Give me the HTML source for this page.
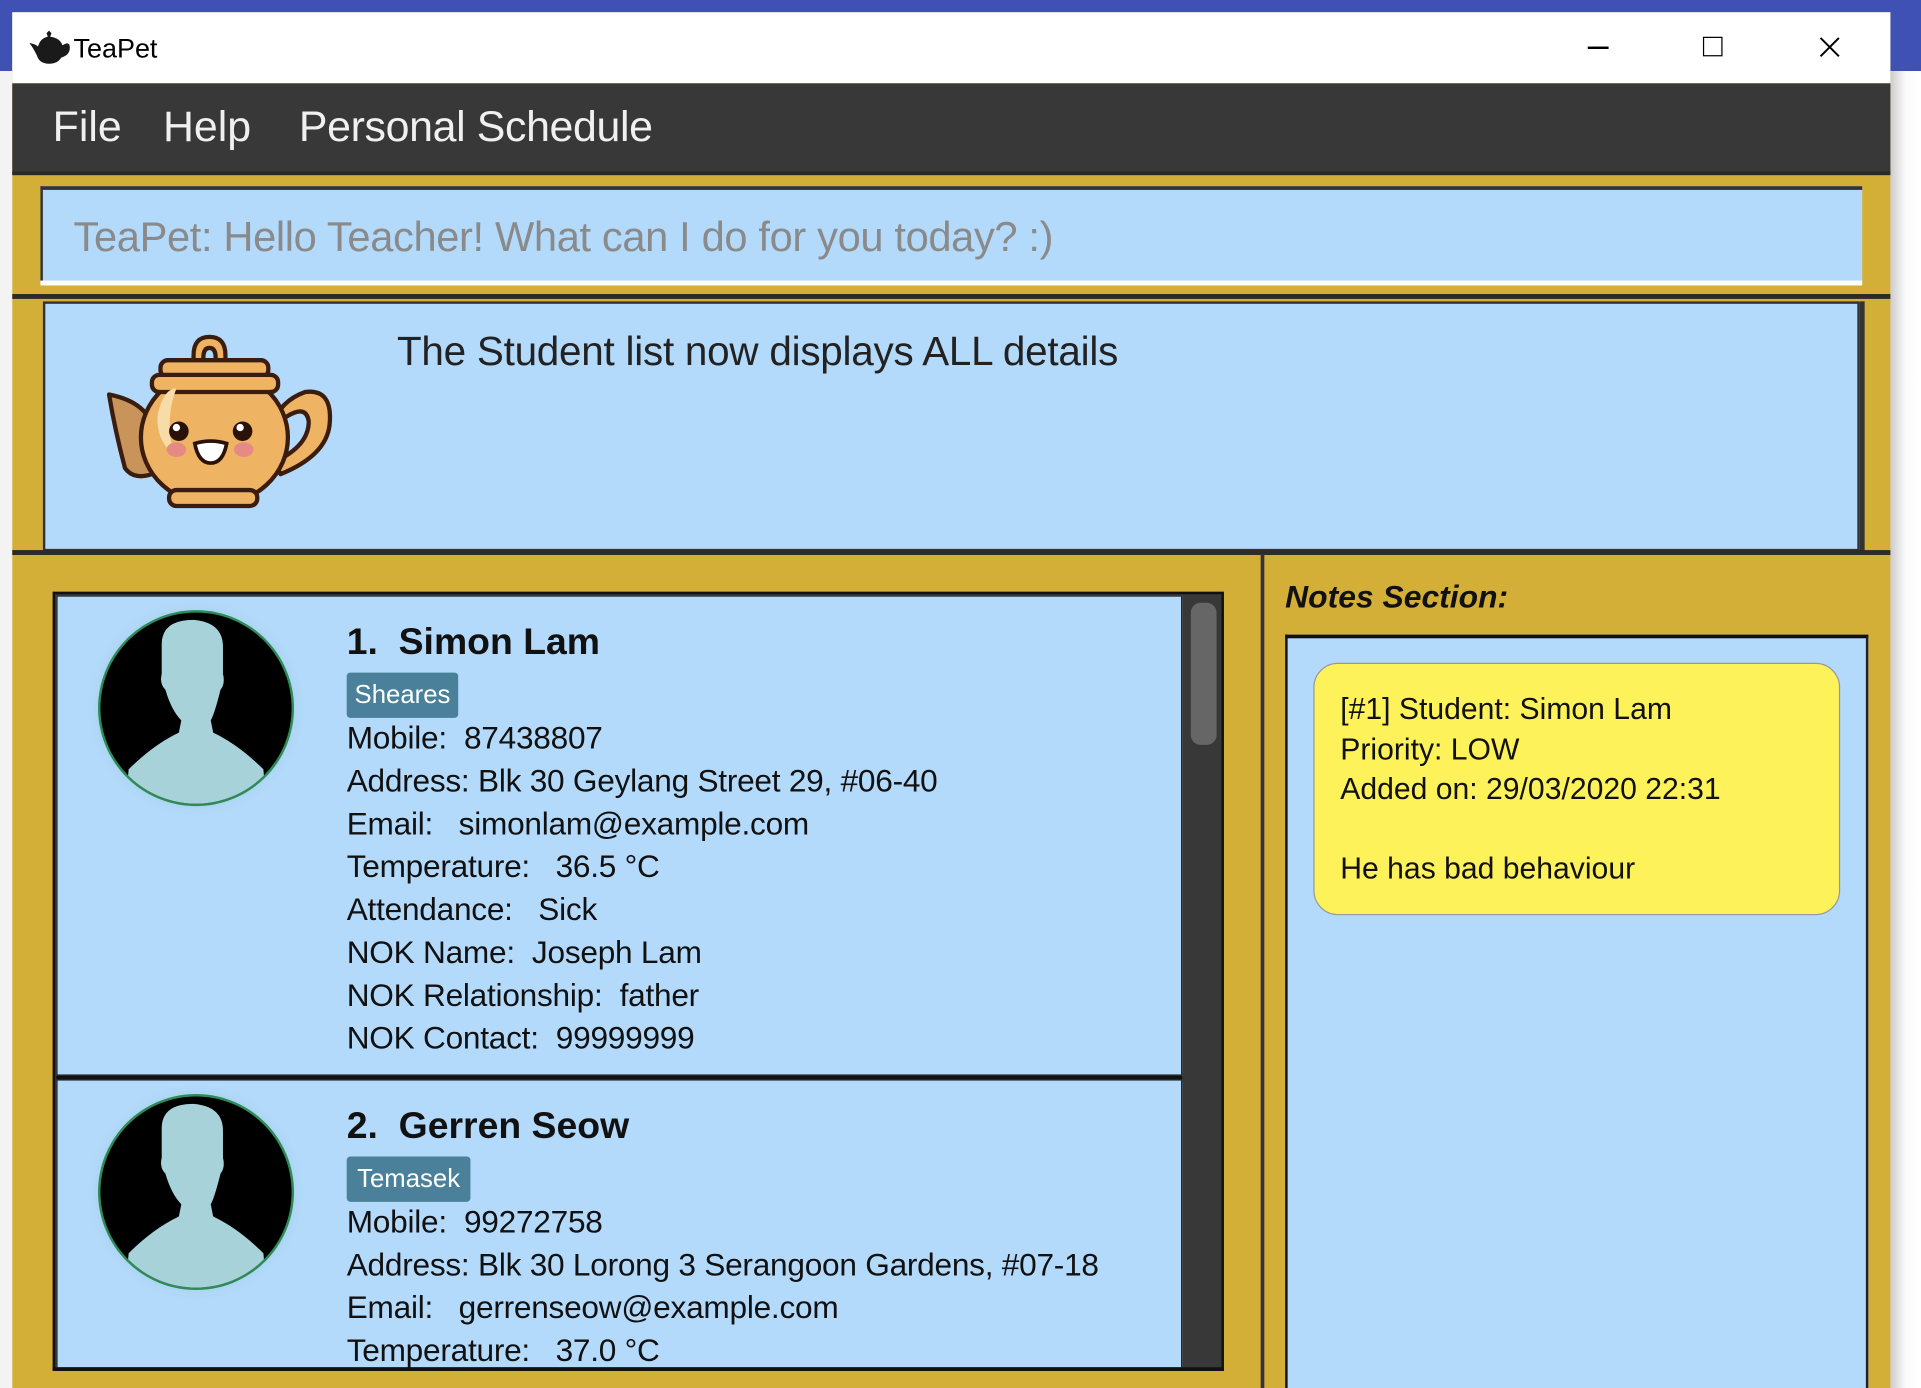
<!DOCTYPE html>
<html><head><meta charset="utf-8"><style>
html,body{margin:0;padding:0;width:1921px;height:1388px;overflow:hidden;background:#fff}
#w{position:absolute;left:0;top:0;width:1568px;height:1133px;transform:scale(1.22513);transform-origin:0 0;font-family:"Liberation Sans",sans-serif}
.a{position:absolute}
.t{position:absolute;white-space:nowrap}
</style></head><body><div id="w">
<div class="a" style="left:0;top:0;width:1568px;height:58px;background:#3f51b5"></div>
<div class="a" style="left:0;top:58px;width:10px;height:1075px;background:#f3f3f3"></div>
<div class="a" style="left:1543px;top:58px;width:25px;height:1075px;background:linear-gradient(90deg,#ccc,#fafafa 12px,#fff)"></div>
<div class="a" style="left:10px;top:10px;width:1533px;height:1123px;background:#d4af37"></div>
<div class="a" style="left:10px;top:10px;width:1533px;height:58px;background:#fff"></div>
<svg class="a" style="left:24px;top:25px" width="34" height="28" viewBox="0 0 34 28"><path d="M14 2 L16 0 L18 2 L17 5 Q25 6 27 12 Q33 8 33 14 Q33 20 26 22 Q23 27 16 27 Q8 27 6 20 Q3 14 0 10 Q5 11 7 13 Q9 6 15 5 Z" fill="#1a1a1a"/></svg>
<div class="t" style="left:60px;top:27px;font-size:22px;line-height:26px;color:#000">TeaPet</div>
<div class="a" style="left:1296px;top:38px;width:17px;height:1.5px;background:#000"></div>
<div class="a" style="left:1390px;top:30px;width:14px;height:14px;border:1.5px solid #000"></div>
<svg class="a" style="left:1485px;top:30px" width="17" height="17"><path d="M1 1L16 16M16 1L1 16" stroke="#000" stroke-width="1.6"/></svg>
<div class="a" style="left:10px;top:68px;width:1533px;height:74px;background:#383838"></div>
<div class="t" style="left:43px;top:82px;font-size:35px;line-height:44px;color:#f0f0f0">File</div>
<div class="t" style="left:133px;top:82px;font-size:35px;line-height:44px;color:#f0f0f0">Help</div>
<div class="t" style="left:244px;top:82px;font-size:35px;line-height:44px;color:#f0f0f0;letter-spacing:-0.3px">Personal Schedule</div>
<div class="a" style="left:10px;top:140px;width:1533px;height:3px;background:#2a2a2a"></div>
<div class="a" style="left:33px;top:152px;width:1487px;height:78px;background:#b3d9fb;border-top:3px solid #333;border-left:2px solid #333;box-sizing:border-box"></div>
<div class="a" style="left:33px;top:229px;width:1487px;height:4px;background:#fff"></div>
<div class="t" style="left:60px;top:172px;font-size:34px;line-height:44px;color:#8a8a8a;letter-spacing:-0.3px">TeaPet: Hello Teacher! What can I do for you today? :)</div>
<div class="a" style="left:10px;top:240px;width:1533px;height:4px;background:#2b2b2b"></div>
<div class="a" style="left:35px;top:246px;width:1483px;height:204px;background:#b3d9fb;border:2px solid #333;box-sizing:border-box"></div>
<div class="a" style="left:1518px;top:246px;width:4px;height:204px;background:#333"></div>
<div class="t" style="left:324px;top:266px;font-size:33px;line-height:42px;color:#222;letter-spacing:-0.2px">The Student list now displays ALL details</div>
<svg class="a" style="left:84px;top:272px" width="190" height="146" viewBox="0 0 190 146">
<g stroke="#3b1d10" stroke-width="3.5" stroke-linejoin="round">
<path d="M74 30 V18 Q74 3 87 3 Q100 3 100 18 V30 H92 V20 Q92 12 87 12 Q82 12 82 20 V30Z" fill="#eeb463"/>
<path d="M5 50 Q30 55 38 70 L40 115 Q25 120 18 110 Q10 80 5 50Z" fill="#c9945a"/>
<path d="M138 75 Q145 55 165 48 Q188 45 185 75 Q182 100 145 115 L140 105 Q168 92 168 72 Q166 58 150 68 Z" fill="#eeb463"/>
<ellipse cx="91" cy="85" rx="60" ry="55" fill="#eeb463"/>
<rect x="47" y="22" width="88" height="14" rx="6" fill="#eeb463"/>
<rect x="40" y="34" width="103" height="14" rx="6" fill="#eeb463"/>
<rect x="54" y="128" width="72" height="13" rx="6" fill="#eeb463"/>
</g>
<path d="M45 65 Q50 45 60 45 Q50 70 58 100 Q42 85 45 65Z" fill="#f8dca8"/>
<circle cx="62" cy="80" r="8" fill="#2a1208"/><circle cx="114" cy="80" r="8" fill="#2a1208"/>
<circle cx="60" cy="77" r="3" fill="#fff"/><circle cx="112" cy="77" r="3" fill="#fff"/>
<ellipse cx="60" cy="95" rx="8" ry="6" fill="#e58a85"/><ellipse cx="115" cy="95" rx="8" ry="6" fill="#e58a85"/>
<path d="M75 90 Q88 86 101 90 Q98 106 88 106 Q78 106 75 90Z" fill="#fff" stroke="#2a1208" stroke-width="3"/>
</svg>
<div class="a" style="left:10px;top:449px;width:1533px;height:4px;background:#2b2b2b"></div>
<div class="a" style="left:1029px;top:452px;width:3px;height:681px;background:#333"></div>
<div class="a" style="left:43px;top:483px;width:956px;height:636px;background:#383838;border:2px solid #111;box-sizing:border-box"></div>
<div class="a" style="left:972px;top:492px;width:21px;height:116px;background:#666;border-radius:8px"></div>
<div class="a" style="left:46px;top:486px;width:919px;height:392px;background:#b3d9fb;border:1px solid #222;box-sizing:border-box"></div>
<div class="a" style="left:46px;top:881px;width:919px;height:235px;background:#b3d9fb;border:1px solid #222;border-bottom:none;box-sizing:border-box"></div>
<div class="a" style="left:46px;top:878px;width:919px;height:3px;background:#111"></div>
<svg class="a" style="left:70px;top:488px" width="180" height="180" viewBox="0 0 180 180">
<defs><clipPath id="c1"><circle cx="90" cy="90" r="78"/></clipPath><radialGradient id="g1"><stop offset="0.8" stop-color="#8fc7c7" stop-opacity="0.6"/><stop offset="1" stop-color="#b3d9fb" stop-opacity="0"/></radialGradient></defs>
<circle cx="90" cy="90" r="90" fill="url(#g1)"/>
<circle cx="90" cy="90" r="80" fill="#2e8b57"/>
<circle cx="90" cy="90" r="78" fill="#000"/>
<g clip-path="url(#c1)" fill="#a8d2da"><path d="M62 38 Q62 18 88 18 Q112 20 112 40 L112 62 Q114 70 110 75 Q105 95 102 100 L104 110 Q125 120 145 140 L150 200 H30 L35 140 Q55 120 76 110 L78 100 Q70 92 65 75 Q60 70 62 62 Z"/></g>
</svg>
<svg class="a" style="left:70px;top:883px" width="180" height="180" viewBox="0 0 180 180">
<defs><clipPath id="c2"><circle cx="90" cy="90" r="78"/></clipPath></defs>
<circle cx="90" cy="90" r="90" fill="url(#g1)"/>
<circle cx="90" cy="90" r="80" fill="#2e8b57"/>
<circle cx="90" cy="90" r="78" fill="#000"/>
<g clip-path="url(#c2)" fill="#a8d2da"><path d="M62 38 Q62 18 88 18 Q112 20 112 40 L112 62 Q114 70 110 75 Q105 95 102 100 L104 110 Q125 120 145 140 L150 200 H30 L35 140 Q55 120 76 110 L78 100 Q70 92 65 75 Q60 70 62 62 Z"/></g>
</svg>
<div class="t" style="left:283px;top:506px;font-size:30.5px;line-height:36px;font-weight:bold;color:#111">1.&nbsp; Simon Lam</div>
<div class="t" style="left:283px;top:549px;width:91px;height:37px;background:#4a8099;border-radius:3px;color:#fff;font-size:21px;line-height:37px;text-align:center">Sheares</div>
<div class="t" style="left:283px;top:586px;font-size:25.8px;line-height:35px;color:#111;letter-spacing:-0.2px">Mobile:&nbsp; 87438807<br>Address: Blk 30 Geylang Street 29, #06-40<br>Email:&nbsp;&nbsp; simonlam@example.com<br>Temperature:&nbsp;&nbsp; 36.5 °C<br>Attendance:&nbsp;&nbsp; Sick<br>NOK Name:&nbsp; Joseph Lam<br>NOK Relationship:&nbsp; father<br>NOK Contact:&nbsp; 99999999</div>
<div class="t" style="left:283px;top:901px;font-size:30.5px;line-height:36px;font-weight:bold;color:#111">2.&nbsp; Gerren Seow</div>
<div class="t" style="left:283px;top:944px;width:101px;height:37px;background:#4a8099;border-radius:3px;color:#fff;font-size:21px;line-height:37px;text-align:center">Temasek</div>
<div class="t" style="left:283px;top:981px;font-size:25.8px;line-height:35px;color:#111;letter-spacing:-0.2px">Mobile:&nbsp; 99272758<br>Address: Blk 30 Lorong 3 Serangoon Gardens, #07-18<br>Email:&nbsp;&nbsp; gerrenseow@example.com<br>Temperature:&nbsp;&nbsp; 37.0 °C</div>
<div class="a" style="left:43px;top:1116px;width:956px;height:3px;background:#111"></div>
<div class="t" style="left:1049px;top:471px;font-size:26px;line-height:32px;font-style:italic;font-weight:bold;color:#111">Notes Section:</div>
<div class="a" style="left:1049px;top:518px;width:476px;height:615px;background:#b3d9fb;border-top:3px solid #111;border-left:2px solid #111;border-right:2px solid #222;box-sizing:border-box"></div>
<div class="a" style="left:1072px;top:541px;width:430px;height:206px;background:#fef25a;border:1px solid #999;border-radius:20px;box-sizing:border-box"></div>
<div class="t" style="left:1094px;top:564px;font-size:24.6px;line-height:32.5px;color:#111">[#1] Student: Simon Lam<br>Priority: LOW<br>Added on: 29/03/2020 22:31<br><br>He has bad behaviour</div>
</div></body></html>
